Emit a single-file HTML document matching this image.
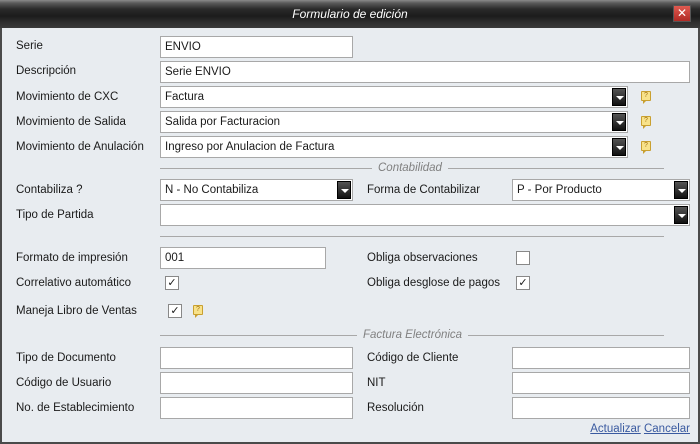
<!DOCTYPE html>
<html><head><meta charset="utf-8"><style>
*{box-sizing:border-box;margin:0;padding:0}
body{width:700px;height:444px;overflow:hidden;background:#e8ecf0;font-family:"Liberation Sans",sans-serif;font-size:11.5px;color:#1a1a1a;position:relative}
#frame{position:absolute;left:0;top:0;width:700px;height:444px;border:2px solid #4a4a4a;border-top:none;z-index:5}
#title{position:absolute;left:0;top:0;width:700px;height:28px;background:linear-gradient(#8a8a8a 0,#5a5a5a 3px,#2a2a2a 9px,#1c1c1c 16px,#2e2e2e 22px,#3a3a3a 28px);color:#fff;font-style:italic;font-size:12px;text-align:center;line-height:28px;z-index:6}
#close{position:absolute;left:673px;top:5px;width:18px;height:17px;background:linear-gradient(#e05a50,#b02a25);border:1px solid #555;color:#fff;font-size:12px;line-height:14px;text-align:center;font-style:normal}
.l{position:absolute;white-space:nowrap}
.i{position:absolute;height:22px;background:#fff;border:1px solid #a8a8a8;padding-left:4px;line-height:20px;white-space:nowrap}
.b{position:absolute;right:1px;top:1px;width:14px;height:18px;background:linear-gradient(#555,#111);border:1px solid #000}
.b:after{content:"";position:absolute;left:3px;top:7px;border-left:4px solid transparent;border-right:4px solid transparent;border-top:4px solid #fff}
.q{position:absolute;width:10px;height:10px;border:1px solid #c9a030;background:#f8e28a;border-radius:1px;font-size:7px;line-height:8px;text-align:center;color:#a07010}
.q:after{content:"";position:absolute;left:1px;bottom:-4px;border-left:3px solid #c9a030;border-bottom:3px solid transparent}
.c{position:absolute;width:14px;height:14px;background:#fff;border:1px solid #888;font-size:11px;line-height:12px;text-align:center}
.hr{position:absolute;height:1px;background:#a8a8a8}
.st{position:absolute;font-style:italic;color:#808080;background:#e8ecf0;padding:0 6px;line-height:14px}
a{color:#3a5aa0;text-decoration:underline}
</style></head><body>
<div id="frame"></div>
<div id="title">Formulario de edición<div id="close">✕</div></div>

<div class="l" style="left:16px;top:40px">Serie</div>
<div class="i" style="left:160px;top:36px;width:193px">ENVIO</div>
<div class="l" style="left:16px;top:65px">Descripción</div>
<div class="i" style="left:160px;top:61px;width:530px">Serie ENVIO</div>
<div class="l" style="left:16px;top:91px">Movimiento de CXC</div>
<div class="i" style="left:160px;top:86px;width:468px">Factura<div class="b"></div></div>
<div class="q" style="left:641px;top:91px">?</div>
<div class="l" style="left:16px;top:116px">Movimiento de Salida</div>
<div class="i" style="left:160px;top:111px;width:468px">Salida por Facturacion<div class="b"></div></div>
<div class="q" style="left:641px;top:116px">?</div>
<div class="l" style="left:16px;top:141px">Movimiento de Anulación</div>
<div class="i" style="left:160px;top:136px;width:468px">Ingreso por Anulacion de Factura<div class="b"></div></div>
<div class="q" style="left:641px;top:141px">?</div>

<div class="hr" style="left:160px;top:168px;width:504px"></div>
<div class="st" style="left:372px;top:161px">Contabilidad</div>

<div class="l" style="left:16px;top:184px">Contabiliza ?</div>
<div class="i" style="left:160px;top:179px;width:193px">N - No Contabiliza<div class="b"></div></div>
<div class="l" style="left:367px;top:184px">Forma de Contabilizar</div>
<div class="i" style="left:512px;top:179px;width:178px">P - Por Producto<div class="b"></div></div>
<div class="l" style="left:16px;top:209px">Tipo de Partida</div>
<div class="i" style="left:160px;top:204px;width:530px"><div class="b"></div></div>

<div class="hr" style="left:160px;top:236px;width:504px"></div>

<div class="l" style="left:16px;top:252px">Formato de impresión</div>
<div class="i" style="left:160px;top:247px;width:166px">001</div>
<div class="l" style="left:367px;top:252px">Obliga observaciones</div>
<div class="c" style="left:516px;top:251px"></div>
<div class="l" style="left:16px;top:277px">Correlativo automático</div>
<div class="c" style="left:165px;top:276px">✓</div>
<div class="l" style="left:367px;top:277px">Obliga desglose de pagos</div>
<div class="c" style="left:516px;top:276px">✓</div>
<div class="l" style="left:16px;top:305px">Maneja Libro de Ventas</div>
<div class="c" style="left:168px;top:304px">✓</div>
<div class="q" style="left:193px;top:305px">?</div>

<div class="hr" style="left:160px;top:335px;width:504px"></div>
<div class="st" style="left:357px;top:328px">Factura Electrónica</div>

<div class="l" style="left:16px;top:352px">Tipo de Documento</div>
<div class="i" style="left:160px;top:347px;width:193px"></div>
<div class="l" style="left:367px;top:352px">Código de Cliente</div>
<div class="i" style="left:512px;top:347px;width:178px"></div>
<div class="l" style="left:16px;top:377px">Código de Usuario</div>
<div class="i" style="left:160px;top:372px;width:193px"></div>
<div class="l" style="left:367px;top:377px">NIT</div>
<div class="i" style="left:512px;top:372px;width:178px"></div>
<div class="l" style="left:16px;top:402px">No. de Establecimiento</div>
<div class="i" style="left:160px;top:397px;width:193px"></div>
<div class="l" style="left:367px;top:402px">Resolución</div>
<div class="i" style="left:512px;top:397px;width:178px"></div>

<div class="l" style="right:10px;top:423px"><a>Actualizar</a> <a>Cancelar</a></div>
</body></html>
